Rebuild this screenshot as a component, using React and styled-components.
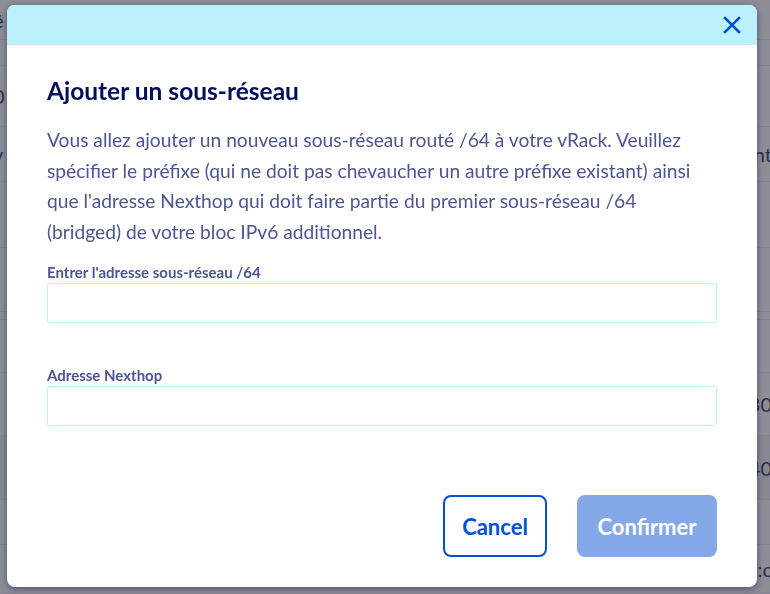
import React from 'react';
import styled, { createGlobalStyle } from 'styled-components';

const GlobalStyle = createGlobalStyle`
  html, body {
    margin: 0;
    padding: 0;
    height: 100%;
    overflow: hidden;
  }
  body {
    font-family: 'Lato', 'Noto Sans', sans-serif;
    background: #ffffff;
  }
`;

// rows of the page behind the dialog; only their edges peek out
const rows = [
  { h: 40, left: 'ê', right: '' },
  { h: 26, left: '', right: '' },
  { h: 61, left: '0', right: '' },
  { h: 55, left: 'v', right: 'ont' },
  { h: 66, left: '', right: '' },
  { h: 64, left: '', right: '' },
  { h: 8, left: '', right: '' },
  { h: 53, left: '', right: '' },
  { h: 63, left: '', right: '30' },
  { h: 64, left: '', right: '40', shaded: true },
  { h: 45, left: '', right: '' },
  { h: 49, left: '', right: '0:c' },
];

export default function App() {
  return (
    <>
      <GlobalStyle />
      <Page>
        {rows.map((r, i) => (
          <Row key={i} $h={r.h} $shaded={r.shaded}>
            <Cell $side="left">{r.left}</Cell>
            <Cell $side="right">{r.right}</Cell>
          </Row>
        ))}
      </Page>
      <Overlay>
        <Modal role="dialog" aria-labelledby="modal-title">
          <Header>
            <CloseButton aria-label="Fermer">
              <svg width="18" height="18" viewBox="0 0 18 18" aria-hidden>
                <path
                  d="M2 2 L16 16 M16 2 L2 16"
                  stroke="#0050d7"
                  strokeWidth="2.6"
                  strokeLinecap="square"
                  fill="none"
                />
              </svg>
            </CloseButton>
          </Header>
          <Body>
            <Title id="modal-title">Ajouter un sous-réseau</Title>
            <Description>
              Vous allez ajouter un nouveau sous-réseau routé /64 à votre vRack. Veuillez
              <br />
              spécifier le préfixe (qui ne doit pas chevaucher un autre préfixe existant) ainsi
              <br />
              que l'adresse Nexthop qui doit faire partie du premier sous-réseau /64
              <br />
              (bridged) de votre bloc IPv6 additionnel.
            </Description>
            <Field>
              <Label htmlFor="subnet">Entrer l'adresse sous-réseau /64</Label>
              <Input id="subnet" type="text" />
            </Field>
            <Field>
              <Label htmlFor="nexthop">Adresse Nexthop</Label>
              <Input id="nexthop" type="text" />
            </Field>
          </Body>
          <Footer>
            <Button $variant="secondary">Cancel</Button>
            <Button $variant="primary" disabled>
              Confirmer
            </Button>
          </Footer>
        </Modal>
      </Overlay>
    </>
  );
}

const Page = styled.div`
  height: 100vh;
  display: flex;
  flex-direction: column;
`;

const Row = styled.div`
  height: ${(p) => p.$h}px;
  flex-shrink: 0;
  display: flex;
  justify-content: space-between;
  align-items: center;
  border-bottom: 1px solid #ebebf0;
  background: ${(p) => (p.$shaded ? '#f2f2f6' : '#ffffff')};
  box-sizing: border-box;
`;

const Cell = styled.span`
  font-size: 20px;
  color: #3c4170;
  margin-left: ${(p) => (p.$side === 'left' ? '-7px' : '0')};
  margin-right: ${(p) => (p.$side === 'right' ? '-2px' : '0')};
`;

const Overlay = styled.div`
  position: fixed;
  inset: 0;
  background: rgba(28, 28, 44, 0.5);
`;

const Modal = styled.div`
  position: absolute;
  left: 7px;
  top: 5px;
  width: 750px;
  height: 582px;
  display: flex;
  flex-direction: column;
  background: #ffffff;
  border-radius: 8px;
  overflow: hidden;
  box-shadow: 0 2px 6px rgba(0, 10, 80, 0.45);
`;

const Header = styled.div`
  height: 40px;
  flex-shrink: 0;
  display: flex;
  justify-content: flex-end;
  align-items: center;
  padding-right: 14px;
  background: #bdf0fd;
`;

const CloseButton = styled.button`
  width: 22px;
  height: 22px;
  padding: 0;
  border: none;
  background: transparent;
  display: flex;
  align-items: center;
  justify-content: center;
  cursor: pointer;
`;

const Body = styled.div`
  flex: 1;
  padding: 31px 40px 0;
  display: flex;
  flex-direction: column;
`;

const Title = styled.h2`
  margin: 0;
  font-size: 24.5px;
  line-height: 30px;
  font-weight: 700;
  color: #000e5c;
`;

const Description = styled.p`
  margin: 19px 0 0;
  font-size: 19.2px;
  line-height: 30.5px;
  color: #4d5592;
  white-space: nowrap;
`;

const Field = styled.div`
  display: flex;
  flex-direction: column;
  margin-top: 15px;
  & + & {
    margin-top: 42px;
  }
`;

const Label = styled.label`
  font-size: 15px;
  line-height: 20px;
  font-weight: 700;
  color: #4d5592;
  margin-bottom: 1px;
`;

const Input = styled.input`
  box-sizing: border-box;
  width: 100%;
  height: 40px;
  border: 1px solid #bef1ff;
  border-radius: 2px;
  background: #ffffff;
  outline: none;
  font-family: inherit;
  font-size: 16px;
  padding: 0 12px;
`;

const Footer = styled.div`
  display: flex;
  justify-content: flex-end;
  gap: 30px;
  padding: 0 40px 30px;
`;

const Button = styled.button`
  box-sizing: border-box;
  height: 62px;
  padding: 0 16px;
  border-radius: 8px;
  font-family: inherit;
  font-size: 22px;
  font-weight: 700;
  cursor: pointer;
  border: 2px solid ${(p) => (p.$variant === 'primary' ? '#85a8e9' : '#0050d7')};
  background: ${(p) => (p.$variant === 'primary' ? '#85a8e9' : '#ffffff')};
  color: ${(p) => (p.$variant === 'primary' ? '#ffffff' : '#0050d7')};
  width: ${(p) => (p.$variant === 'primary' ? '140px' : '104px')};
  &:disabled {
    cursor: not-allowed;
  }
`;
